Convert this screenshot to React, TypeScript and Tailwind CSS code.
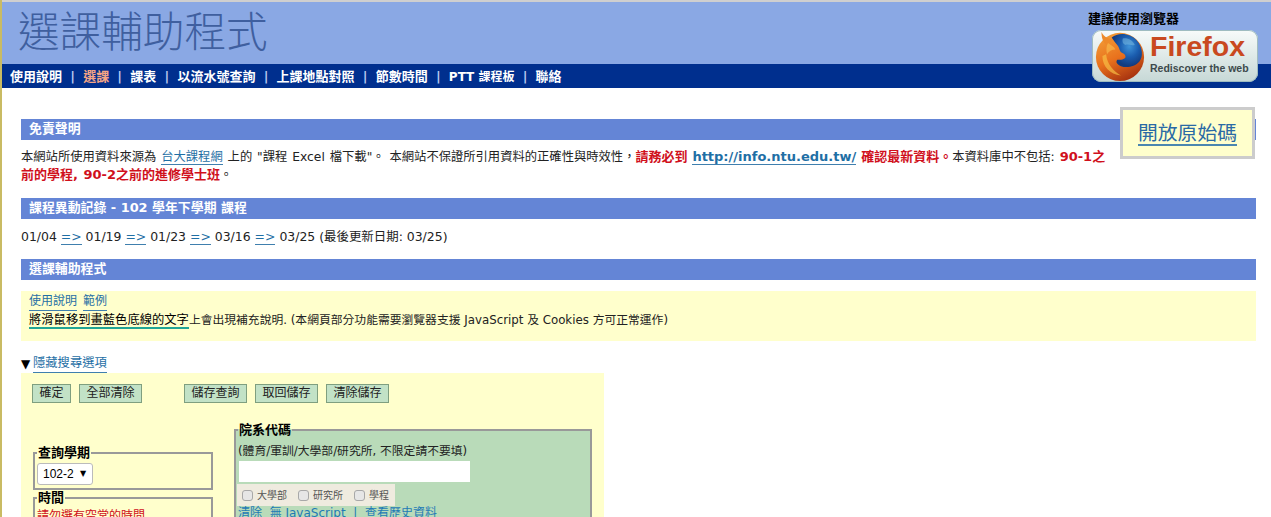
import React from "react";

const sans = "font-['DejaVu_Sans','Noto_Sans_CJK_TC',sans-serif]";

function A({ children }: { children: React.ReactNode }) {
  return <a className="text-[#1f6fa5] border-b border-[#3f7fae] cursor-pointer">{children}</a>;
}

function SectionBar({ children }: { children: React.ReactNode }) {
  return (
    <h2 className="h-[21px] bg-[#6485d6] pl-2 text-[12.9px] leading-[19px] font-bold text-white">{children}</h2>
  );
}

function Red({ children }: { children: React.ReactNode }) {
  return <strong className="text-[13px] font-bold text-[#d0101c]">{children}</strong>;
}

function Btn({ children, className = "" }: { children: React.ReactNode; className?: string }) {
  return (
    <button className={`h-[19px] border border-[#7f9f7f] bg-[#c2e2c6] px-[6.5px] text-[12px] leading-[17px] text-[#222] ${className}`}>
      {children}
    </button>
  );
}

function Check({ label, className = "" }: { label: string; className?: string }) {
  return (
    <label className={`flex items-center gap-[4px] ${className}`}>
      <input type="checkbox" className="h-[11px] w-[11px] appearance-none rounded-[3px] border border-[#a8a8a8] bg-[#e6e6e6]" />
      {label}
    </label>
  );
}

function FirefoxLogo() {
  return (
    <svg viewBox="0 0 54 54" className="ml-[3px] h-[52px] w-[50px] shrink-0" aria-hidden="true">
      <defs>
        <radialGradient id="globe" cx="58%" cy="38%" r="58%">
          <stop offset="0%" stopColor="#3f93d8" />
          <stop offset="55%" stopColor="#1a5cae" />
          <stop offset="100%" stopColor="#123c80" />
        </radialGradient>
        <linearGradient id="fox" x1="0.1" y1="0" x2="0.6" y2="1">
          <stop offset="0%" stopColor="#f4a23a" />
          <stop offset="55%" stopColor="#e8701c" />
          <stop offset="100%" stopColor="#a83410" />
        </linearGradient>
      </defs>
      <circle cx="27" cy="28" r="26" fill="url(#fox)" />
      <path d="M7 1C7 8 9 12 12 15L21 9C15 9 10 7 7 1Z" fill="#ee8a2a" />
      <path
        d="M18 7C25 1 38 2 45 10C52 18 52 28 48 33C43 39 34 40 28 38C24 36 22 34 24 31C28 31 32 31 33 28C33 25 30 24 28 23C26 20 26 17 24 15C22 13 20 10 18 7Z"
        fill="url(#globe)"
      />
      <path d="M30 8C35 7 41 10 43 15C39 16 36 14 33 15C30 14 29 11 30 8Z" fill="#7fc0e4" opacity=".5" />
      <path d="M8 27C8 38 16 47 28 48C20 43 13 36 12 25Z" fill="#f9c548" opacity=".65" />
      <path d="M14 13C17 15 21 17 22 20C18 20 15 22 13 25C12 21 12 17 14 13Z" fill="#f8b84a" opacity=".7" />
    </svg>
  );
}

const navItems = ["使用說明", "選課", "課表", "以流水號查詢", "上課地點對照", "節數時間", "PTT 課程板", "聯絡"];

function Header() {
  return (
    <header className="relative border-t-2 border-[#cfcfcf]">
      <div className="h-[62px] bg-[#8aa8e4] pl-4">
        <h1 className="font-['Noto_Sans_CJK_TC',sans-serif] text-[41.6px] leading-[54px] font-light text-[#3f5f9f]">
          選課輔助程式
        </h1>
      </div>
      <nav className="flex h-6 items-center gap-[8.2px] bg-[#002f8e] pt-[2px] pl-2 text-[13px] font-bold whitespace-pre text-white">
        {navItems.map((item, i) => (
          <React.Fragment key={item}>
            {i > 0 && <span className="text-[#b8c8ee]">|</span>}
            <a className={i === 1 ? "text-[#f5a585]" : item.startsWith("PTT") ? "text-[12px]" : ""}>{item}</a>
          </React.Fragment>
        ))}
      </nav>
      <div className="absolute top-[9px] left-[1086px]">
        <div className="text-[13px] leading-[16px] font-bold text-black">建議使用瀏覽器</div>
        <div className="mt-[3px] ml-[4px] flex h-[52px] w-[166px] items-center rounded-[9px] bg-gradient-to-b from-[#f8fbfa] to-[#c6d8d6] shadow-[inset_0_0_0_1px_#9fbcc0]">
          <FirefoxLogo />
          <div className="ml-[5px] pb-[6px] font-['Liberation_Sans',sans-serif]">
            <div className="text-[28.5px] leading-[29px] font-bold text-[#c9491f]">Firefox</div>
            <div className="text-[10.5px] leading-[14px] font-bold text-[#3d4a4c]">Rediscover the web</div>
          </div>
        </div>
      </div>
    </header>
  );
}

function SearchPanel() {
  return (
    <form className="w-[583px] bg-[#ffffcc] px-[11px] pt-[11px] pb-10">
      <div className="flex">
        <Btn>確定</Btn>
        <Btn className="ml-2">全部清除</Btn>
        <Btn className="ml-[42px]">儲存查詢</Btn>
        <Btn className="ml-2">取回儲存</Btn>
        <Btn className="ml-2">清除儲存</Btn>
      </div>
      <div className="mt-[20px] flex items-start">
        <div className="mt-[23px] ml-[1px] w-[180px]">
          <fieldset className="h-[44px] border-2 border-[#999] px-[2px]">
            <legend className="px-[1px] text-[13px] leading-[14px] font-bold text-black">查詢學期</legend>
            <div className="relative mt-[3px] w-[56px]">
              <select className="h-[22px] w-[56px] appearance-none rounded-[3px] border border-[#bbb] bg-white pl-[5px] font-['Liberation_Sans',sans-serif] text-[12px] text-black">
                <option>102-2</option>
              </select>
              <span className="absolute top-[6px] left-[43px] text-[8px] leading-[10px] text-black">▼</span>
            </div>
          </fieldset>
          <fieldset className="mt-[1px] border-2 border-[#999] px-[2px] pb-6">
            <legend className="px-[1px] text-[13px] leading-[14px] font-bold text-black">時間</legend>
            <p className="mt-[3px] text-[12px] leading-[16px] text-[#d0101c]">請勿選有空堂的時間</p>
          </fieldset>
        </div>
        <fieldset className="ml-[21px] w-[358px] border-2 border-[#999] bg-[#b9dbb9] px-[2px] pb-6">
          <legend className="px-[1px] text-[13px] leading-[14px] font-bold text-black">院系代碼</legend>
          <p className="mt-[6px] text-[11.8px] leading-[17px] text-[#222]">(體育/軍訓/大學部/研究所, 不限定請不要填)</p>
          <input type="text" className="mt-[1px] ml-[1px] block h-[21px] w-[231px] bg-white" />
          <div className="mt-[2px] -ml-[1px] flex h-[22px] w-[158px] items-center bg-[#efebdf] pl-[5px] text-[10px] text-[#555]">
            <Check label="大學部" />
            <Check label="研究所" className="ml-[11px]" />
            <Check label="學程" className="ml-[11px]" />
          </div>
          <p className="text-[12px] leading-[15px] whitespace-pre text-[#1f7ab5]">清除  無 JavaScript  |  查看歷史資料</p>
        </fieldset>
      </div>
    </form>
  );
}

export default function App() {
  return (
    <div className={`relative h-[517px] overflow-hidden border-l-[2px] border-[#c9bb63] bg-white ${sans} text-[#222]`}>
      <Header />
      <main className="pt-[31px] pr-[15px] pl-[19px] text-[12.3px]">
        <SectionBar>免責聲明</SectionBar>
        <p className="mt-2 pr-[140px] leading-[18px] [word-spacing:1px]">
          本網站所使用資料來源為 <A>台大課程網</A> 上的 "課程 Excel 檔下載"。 本網站不保證所引用資料的正確性與時效性，
          <Red>請務必到</Red> <a className="border-b border-[#3f7fae] text-[13px] font-bold text-[#1f6fa5]">http://info.ntu.edu.tw/</a>{" "}
          <Red>確認最新資料。</Red>本資料庫中不包括: <Red>90-1之</Red>
          <br />
          <Red>前的學程, 90-2之前的進修學士班</Red>。
        </p>
        <div className="mt-[14px]">
          <SectionBar>課程異動記錄 - 102 學年下學期 課程</SectionBar>
        </div>
        <p className="mt-[9px] text-[12.45px] leading-[18px]">
          01/04 <A>=&gt;</A> 01/19 <A>=&gt;</A> 01/23 <A>=&gt;</A> 03/16 <A>=&gt;</A> 03/25 (最後更新日期: 03/25)
        </p>
        <div className="mt-[13px]">
          <SectionBar>選課輔助程式</SectionBar>
        </div>
        <div className="mt-[11px] h-[50px] bg-[#ffffcc] px-2 pt-[1px] text-[11.8px] leading-[18px]">
          <div className="flex gap-[6px] text-[12px]">
            <A>使用說明</A>
            <A>範例</A>
          </div>
          <div>
            <span className="border-b-2 border-[#20a596] text-[12.3px] text-black">將滑鼠移到畫藍色底線的文字</span>上會出現補充說明. (本網頁部分功能需要瀏覽器支援 JavaScript 及 Cookies 方可正常運作)
          </div>
        </div>
        <div className="mt-[14px] flex items-center leading-[17px]">
          <span className="w-3 text-[12px] text-black">▼</span>
          <A>隱藏搜尋選項</A>
        </div>
        <SearchPanel />
      </main>
      <aside className="absolute top-[107px] left-[1118px] flex h-[52px] w-[135px] items-center justify-center border-[3px] border-[#cccccc] bg-[#ffffcc]">
        <a className="mt-[3px] border-b-2 border-[#4a86b0] text-[19.8px] leading-[20px] text-[#2a6aa5]">開放原始碼</a>
      </aside>
    </div>
  );
}
